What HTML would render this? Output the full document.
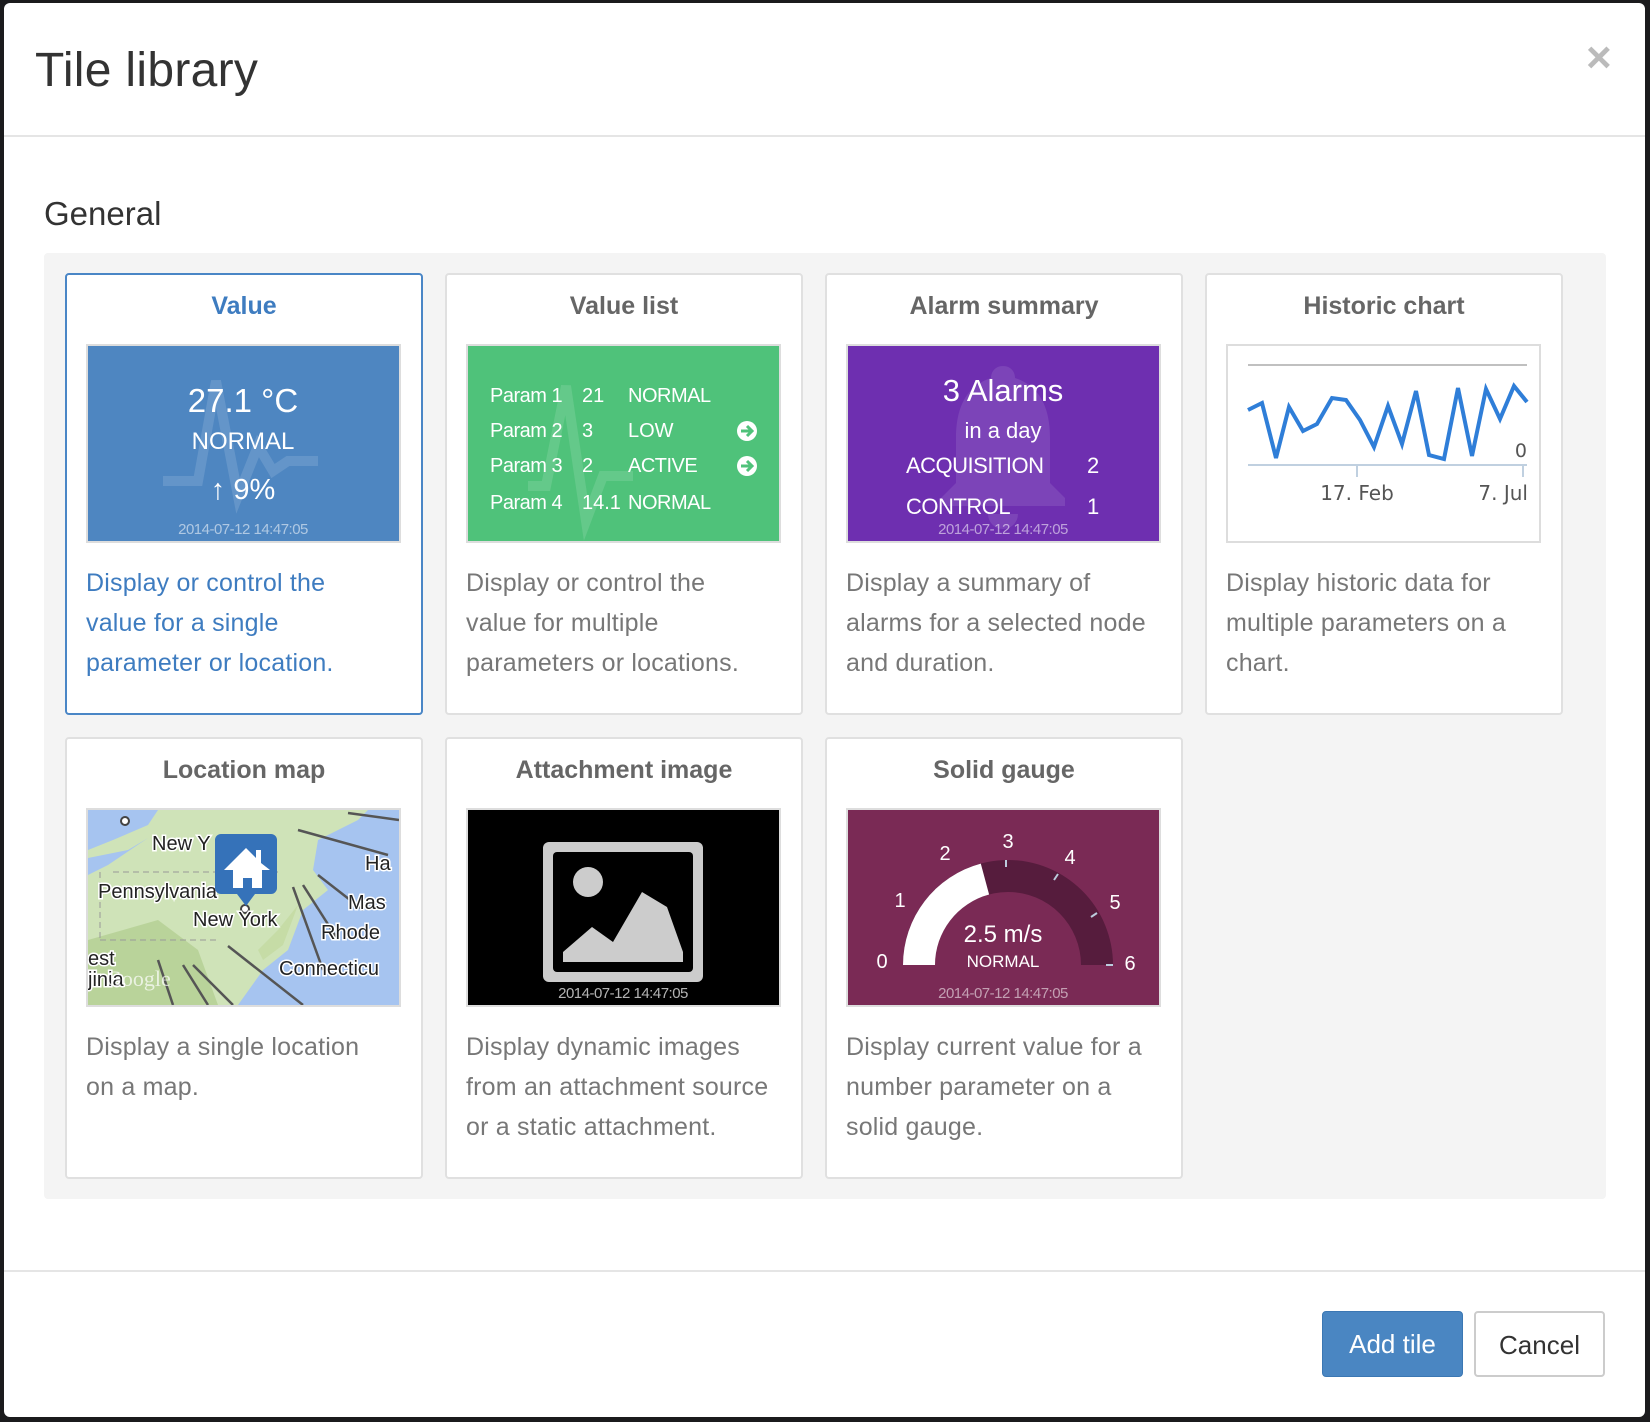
<!DOCTYPE html>
<html><head><meta charset="utf-8"><style>
*{box-sizing:border-box;margin:0;padding:0}
body{width:1650px;height:1422px;background:#1b1b1d;position:relative;overflow:hidden;font-family:"Liberation Sans",Arial,sans-serif}
.modal{position:absolute;left:4px;top:3px;width:1641px;height:1414px;background:#fff;border-radius:6px;overflow:hidden}
.abs{position:absolute}
.title{left:31px;top:38px;font-size:48px;color:#333;line-height:60px;letter-spacing:.3px}
.close{left:1582px;top:30px;font-size:44px;color:#bbb;font-weight:bold;line-height:50px}
.hr1{left:0;top:132px;width:100%;height:2px;background:#e5e5e5}
.gen{left:40px;top:192px;font-size:33px;color:#333}
.panel{left:40px;top:250px;width:1562px;height:946px;background:#f4f4f4;border-radius:4px}
.card{position:absolute;width:358px;height:442px;background:#fff;border:2px solid #e0e0e0;border-radius:4px}
.card.sel{border-color:#4a86c6}
.ct{position:absolute;left:0;width:100%;top:14px;text-align:center;font-size:25px;font-weight:bold;color:#666;line-height:34px}
.sel .ct{color:#3e7cc0}
.img{position:absolute;left:19px;top:69px;width:315px;height:199px;border:2px solid #ddd;overflow:hidden}
.img .in{position:absolute;left:0;top:0;width:311px;height:195px}
.desc{position:absolute;left:19px;top:288px;width:340px;font-size:25px;line-height:40px;color:#777;white-space:nowrap;letter-spacing:.2px}
.sel .desc{color:#3e7cc0}
.t{position:absolute;white-space:nowrap;color:#fff;line-height:1}
.c{transform:translateX(-50%)}
.ts{font-size:15px;color:rgba(255,255,255,.55);left:155px;top:176px;letter-spacing:-.5px}
.hr2{left:0;top:1267px;width:100%;height:2px;background:#e5e5e5}
.btn{position:absolute;top:1308px;height:66px;border-radius:4px;font-size:26px;line-height:64px;text-align:center}
</style></head><body>
<div class="modal">
<div class="abs title">Tile library</div>
<div class="abs close">×</div>
<div class="abs hr1"></div>
<div class="abs gen">General</div>
<div class="abs panel"></div>

<div class="card sel" style="left:61px;top:270px">
 <div class="ct">Value</div>
 <div class="img"><div class="in" style="background:#4e86c1">
  <svg class="abs" style="left:0;top:0" width="311" height="195"><polyline points="75,135 110,135 128,35 150,150 170,100 185,125 200,115 230,115" fill="none" stroke="rgba(255,255,255,.13)" stroke-width="10"/></svg>
  <div class="t c" style="left:155px;top:38px;font-size:33px">27.1 °C</div>
  <div class="t c" style="left:155px;top:84px;font-size:24px">NORMAL</div>
  <div class="t c" style="left:155px;top:130px;font-size:29px">↑ 9%</div>
  <div class="t c ts">2014-07-12 14:47:05</div>
 </div></div>
 <div class="desc">Display or control the<br>value for a single<br>parameter or location.</div>
</div>

<div class="card" style="left:441px;top:270px">
 <div class="ct">Value list</div>
 <div class="img"><div class="in" style="background:#4fc27a">
  <svg class="abs" style="left:0;top:0" width="311" height="195"><polyline points="60,140 78,140 98,40 118,175 135,130 165,130" fill="none" stroke="rgba(255,255,255,.12)" stroke-width="10"/></svg>
  <div class="t" style="left:22px;top:40px;font-size:20px;letter-spacing:-.5px">Param 1</div><div class="t" style="left:114px;top:40px;font-size:20px">21</div><div class="t" style="left:160px;top:40px;font-size:20px;letter-spacing:-.5px">NORMAL</div>
  <div class="t" style="left:22px;top:75px;font-size:20px;letter-spacing:-.5px">Param 2</div><div class="t" style="left:114px;top:75px;font-size:20px">3</div><div class="t" style="left:160px;top:75px;font-size:20px">LOW</div>
  <div class="t" style="left:22px;top:110px;font-size:20px;letter-spacing:-.5px">Param 3</div><div class="t" style="left:114px;top:110px;font-size:20px">2</div><div class="t" style="left:160px;top:110px;font-size:20px;letter-spacing:-.5px">ACTIVE</div>
  <div class="t" style="left:22px;top:147px;font-size:20px;letter-spacing:-.5px">Param 4</div><div class="t" style="left:114px;top:147px;font-size:20px">14.1</div><div class="t" style="left:160px;top:147px;font-size:20px;letter-spacing:-.5px">NORMAL</div>
  <svg class="abs" style="left:268px;top:74px" width="22" height="22"><circle cx="11" cy="11" r="10" fill="#fff"/><path d="M5 11H16M11 6L16 11L11 16" fill="none" stroke="#4fc27a" stroke-width="3"/></svg>
  <svg class="abs" style="left:268px;top:109px" width="22" height="22"><circle cx="11" cy="11" r="10" fill="#fff"/><path d="M5 11H16M11 6L16 11L11 16" fill="none" stroke="#4fc27a" stroke-width="3"/></svg>
 </div></div>
 <div class="desc">Display or control the<br>value for multiple<br>parameters or locations.</div>
</div>

<div class="card" style="left:821px;top:270px">
 <div class="ct">Alarm summary</div>
 <div class="img"><div class="in" style="background:#6e2fb0">
  <svg class="abs" style="left:0;top:0" width="311" height="195"><path d="M155 20c-8 0-12 6-12 12-25 8-35 30-35 60v45l-15 15v8h124v-8l-15-15v-45c0-30-10-52-35-60 0-6-4-12-12-12zM140 168a15 15 0 0 0 30 0z" fill="rgba(255,255,255,.1)"/></svg>
  <div class="t c" style="left:155px;top:29px;font-size:31px">3 Alarms</div>
  <div class="t c" style="left:155px;top:74px;font-size:22px">in a day</div>
  <div class="t" style="left:58px;top:109px;font-size:22px;letter-spacing:-.5px">ACQUISITION</div><div class="t" style="left:239px;top:109px;font-size:22px">2</div>
  <div class="t" style="left:58px;top:150px;font-size:22px;letter-spacing:-.5px">CONTROL</div><div class="t" style="left:239px;top:150px;font-size:22px">1</div>
  <div class="t c ts">2014-07-12 14:47:05</div>
 </div></div>
 <div class="desc">Display a summary of<br>alarms for a selected node<br>and duration.</div>
</div>

<div class="card" style="left:1201px;top:270px">
 <div class="ct">Historic chart</div>
 <div class="img"><div class="in" style="background:#fff">
  <svg class="abs" style="left:0;top:0" width="311" height="195">
   <line x1="20" y1="19" x2="299" y2="19" stroke="#c0c0c0" stroke-width="2"/>
   <line x1="20" y1="119" x2="299" y2="119" stroke="#c0d0e0" stroke-width="2"/>
   <line x1="129" y1="119" x2="129" y2="131" stroke="#c0d0e0" stroke-width="2"/>
   <line x1="295" y1="119" x2="295" y2="131" stroke="#c0d0e0" stroke-width="2"/>
   <polyline points="20,64 34,57 48,112 61,61 75,85 89,78 104,52 118,54 132,74 146,101 160,60 174,98 188,45 201,109 216,113 230,42 244,110 258,43 272,73 286,40 299,56" fill="none" stroke="#2f7ed8" stroke-width="4" stroke-linejoin="miter"/>
   <text x="299" y="111" text-anchor="end" font-family="DejaVu Sans,sans-serif" font-size="19" fill="#555">0</text>
   <text x="129" y="154" text-anchor="middle" font-family="DejaVu Sans,sans-serif" font-size="20" fill="#555">17. Feb</text>
   <text x="300" y="154" text-anchor="end" font-family="DejaVu Sans,sans-serif" font-size="20" fill="#555">7. Jul</text>
  </svg>
 </div></div>
 <div class="desc">Display historic data for<br>multiple parameters on a<br>chart.</div>
</div>

<div class="card" style="left:61px;top:734px">
 <div class="ct">Location map</div>
 <div class="img"><div class="in" style="background:#cfe3b8">
  <svg class="abs" style="left:0;top:0" width="311" height="195">
   <path d="M0 0H70L60 15 25 30 0 40Z" fill="#a6c4f0"/>
   <path d="M0 48 40 40 60 28 20 55 0 65Z" fill="#a6c4f0"/>
   <path d="M311 0V195H150L175 160 200 140 215 100 240 80 225 60 230 30 270 10 280 0Z" fill="#a6c4f0"/>
   <path d="M175 150 195 135 210 95 190 120 170 140Z" fill="#c6dca6"/>
   <path d="M0 130 70 110 110 140 130 195H0Z" fill="#b9d39a"/>
   <g stroke="#555" stroke-width="2.5" fill="none"><line x1="210" y1="20" x2="300" y2="45"/><line x1="230" y1="65" x2="275" y2="100"/><line x1="215" y1="75" x2="250" y2="130"/><line x1="205" y1="77" x2="235" y2="160"/><line x1="140" y1="136" x2="215" y2="195"/><line x1="105" y1="155" x2="145" y2="195"/><line x1="95" y1="155" x2="120" y2="195"/><line x1="70" y1="150" x2="85" y2="195"/><line x1="260" y1="3" x2="311" y2="10"/></g>
   <g stroke="#999" stroke-width="1" stroke-dasharray="6 4" fill="none"><line x1="25" y1="62" x2="190" y2="62"/><line x1="12" y1="130" x2="130" y2="130"/><line x1="12" y1="62" x2="12" y2="130"/></g>
   <circle cx="37" cy="11" r="4" fill="#fff" stroke="#444" stroke-width="2"/>
   <circle cx="157" cy="99" r="4" fill="#fff" stroke="#444" stroke-width="2"/>
   <g font-family="Liberation Sans,sans-serif" font-size="20" fill="#222" stroke="#fff" stroke-width="3" paint-order="stroke">
    <text x="64" y="40">New Y</text><text x="10" y="88">Pennsylvania</text><text x="105" y="116">New York</text>
    <text x="277" y="60">Ha</text><text x="260" y="99">Mas</text><text x="233" y="129">Rhode</text><text x="191" y="165">Connecticu</text><text x="0" y="155">est</text><text x="0" y="176">jinia</text>
   </g>
   <text x="18" y="176" font-family="Liberation Serif,serif" font-size="22" fill="rgba(255,255,255,.7)">Google</text>
   <path d="M133 24h50a6 6 0 0 1 6 6v48a6 6 0 0 1-6 6h-16l-9 12-9-12h-16a6 6 0 0 1-6-6v-48a6 6 0 0 1 6-6z" fill="#3572b9"/>
   <path d="M136 60 158 38 168 48V40h5v13l9 7h-8v18h-10v-10h-9v10h-10v-18z" fill="#fff"/>
  </svg>
 </div></div>
 <div class="desc">Display a single location<br>on a map.</div>
</div>

<div class="card" style="left:441px;top:734px">
 <div class="ct">Attachment image</div>
 <div class="img"><div class="in" style="background:#000">
  <svg class="abs" style="left:0;top:0" width="311" height="195">
   <rect x="75" y="32" width="160" height="140" rx="6" fill="#ccc"/>
   <rect x="85" y="42" width="140" height="120" rx="4" fill="#000"/>
   <circle cx="120" cy="72" r="15" fill="#ccc"/>
   <path d="M95 142 124 117 145 132 174 82 199 97 215 142V152H95Z" fill="#ccc"/>
  </svg>
  <div class="t c ts" style="color:rgba(255,255,255,.7)">2014-07-12 14:47:05</div>
 </div></div>
 <div class="desc">Display dynamic images<br>from an attachment source<br>or a static attachment.</div>
</div>

<div class="card" style="left:821px;top:734px">
 <div class="ct">Solid gauge</div>
 <div class="img"><div class="in" style="background:#7a2a55">
  <svg class="abs" style="left:0;top:0" width="311" height="195">
   <path d="M55 155A105 105 0 0 1 265 155H233A73 73 0 0 0 87 155Z" fill="#561c3d"/>
   <path d="M55 155A105 105 0 0 1 132.8 53.6L141.1 84.5A73 73 0 0 0 87 155Z" fill="#fff"/>
   <g stroke="#bcd" stroke-width="2"><line x1="158" y1="50" x2="158" y2="57"/><line x1="210" y1="64" x2="206" y2="70"/><line x1="249" y1="103" x2="243" y2="107"/><line x1="265" y1="155" x2="258" y2="155"/></g>
   <g font-family="Liberation Sans,sans-serif" font-size="20" fill="#fff" text-anchor="middle">
    <text x="34" y="158">0</text><text x="52" y="97">1</text><text x="97" y="50">2</text><text x="160" y="38">3</text><text x="222" y="54">4</text><text x="267" y="99">5</text><text x="282" y="160">6</text>
   </g>
  </svg>
  <div class="t c" style="left:155px;top:113px;font-size:24px">2.5 m/s</div>
  <div class="t c" style="left:155px;top:143px;font-size:17px">NORMAL</div>
  <div class="t c ts">2014-07-12 14:47:05</div>
 </div></div>
 <div class="desc">Display current value for a<br>number parameter on a<br>solid gauge.</div>
</div>

<div class="abs hr2"></div>
<div class="btn" style="left:1318px;width:141px;background:#4a86c2;border:1px solid #3b77b3;color:#fff">Add tile</div>
<div class="btn" style="left:1470px;width:131px;background:#fff;border:2px solid #ccc;color:#333">Cancel</div>
</div>
</body></html>
